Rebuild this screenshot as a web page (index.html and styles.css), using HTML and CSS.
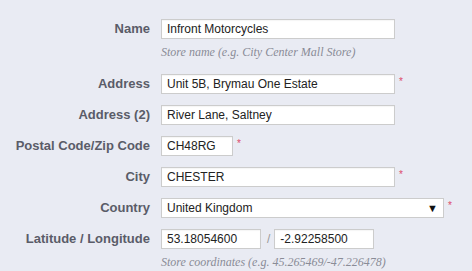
FILE: index.html
```html
<!DOCTYPE html>
<html>
<head>
<meta charset="utf-8">
<link rel="stylesheet" href="styles.css">
</head>
<body>
<form class="form">
  <div class="row">
    <label class="label">Name</label>
    <div class="field">
      <div class="line"><input class="input wide" value="Infront Motorcycles"></div>
      <p class="help">Store name (e.g. City Center Mall Store)</p>
    </div>
  </div>
  <div class="row">
    <label class="label">Address</label>
    <div class="field">
      <div class="line"><input class="input wide" value="Unit 5B, Brymau One Estate"><span class="req">*</span></div>
    </div>
  </div>
  <div class="row">
    <label class="label">Address (2)</label>
    <div class="field">
      <div class="line"><input class="input wide" value="River Lane, Saltney"></div>
    </div>
  </div>
  <div class="row">
    <label class="label">Postal Code/Zip Code</label>
    <div class="field">
      <div class="line"><input class="input short" value="CH48RG"><span class="req">*</span></div>
    </div>
  </div>
  <div class="row">
    <label class="label">City</label>
    <div class="field">
      <div class="line"><input class="input wide" value="CHESTER"><span class="req">*</span></div>
    </div>
  </div>
  <div class="row">
    <label class="label">Country</label>
    <div class="field">
      <div class="line">
        <span class="select-wrap">
          <select class="select"><option>United Kingdom</option></select>
          <span class="arrow">▼</span>
        </span>
        <span class="req">*</span>
      </div>
    </div>
  </div>
  <div class="row">
    <label class="label">Latitude / Longitude</label>
    <div class="field">
      <div class="line"><input class="input coord" value="53.18054600"><span class="sep">/</span><input class="input coord" value="-2.92258500"></div>
      <p class="help">Store coordinates (e.g. 45.265469/-47.226478)</p>
    </div>
  </div>
</form>
</body>
</html>
```

FILE: styles.css
```css
html, body {
  margin: 0;
  padding: 0;
  background: #e9ebf3;
}
body {
  font-family: "Liberation Sans", Arial, sans-serif;
  font-size: 13px;
  color: #222;
}
.form {
  padding-top: 19px;
  display: flex;
  flex-direction: column;
  gap: 11px;
}
.row {
  display: grid;
  grid-template-columns: 150px 1fr;
  column-gap: 11px;
  align-items: start;
}
.label {
  text-align: right;
  font-weight: bold;
  color: #5a5c68;
  line-height: 20px;
}
.line {
  display: flex;
  align-items: flex-start;
  height: 20px;
}
.input {
  box-sizing: border-box;
  height: 20px;
  border: 1px solid #ccc;
  background: #fff;
  padding: 0 5px;
  font-family: "Liberation Sans", Arial, sans-serif;
  font-size: 12px;
  color: #222;
  margin: 0;
  box-shadow: inset 0 1px 1px rgba(0,0,0,0.04);
  outline: none;
}
.wide { width: 234px; }
.short { width: 72px; }
.coord { width: 100px; }
.req {
  color: #dd4a6a;
  font-size: 10px;
  line-height: 10px;
  margin-left: 4px;
  margin-top: 3px;
}
.sep {
  color: #999;
  margin: 0 4px 0 6px;
  line-height: 20px;
  font-size: 12px;
}
.select-wrap {
  position: relative;
  display: inline-block;
}
.select {
  appearance: none;
  -webkit-appearance: none;
  box-sizing: border-box;
  width: 283px;
  height: 20px;
  border: 1px solid #ccc;
  background: #fff;
  padding: 0 5px;
  margin: 0;
  border-radius: 0;
  font-family: "Liberation Sans", Arial, sans-serif;
  font-size: 12px;
  color: #222;
  outline: none;
}
.arrow {
  position: absolute;
  right: 6px;
  top: 3px;
  font-size: 11px;
  line-height: 14px;
  color: #111;
  pointer-events: none;
}
.help {
  margin: 6px 0 4px;
  font-family: "Liberation Serif", Georgia, serif;
  font-style: italic;
  font-size: 12px;
  line-height: 14px;
  color: #8a8c97;
}
```
